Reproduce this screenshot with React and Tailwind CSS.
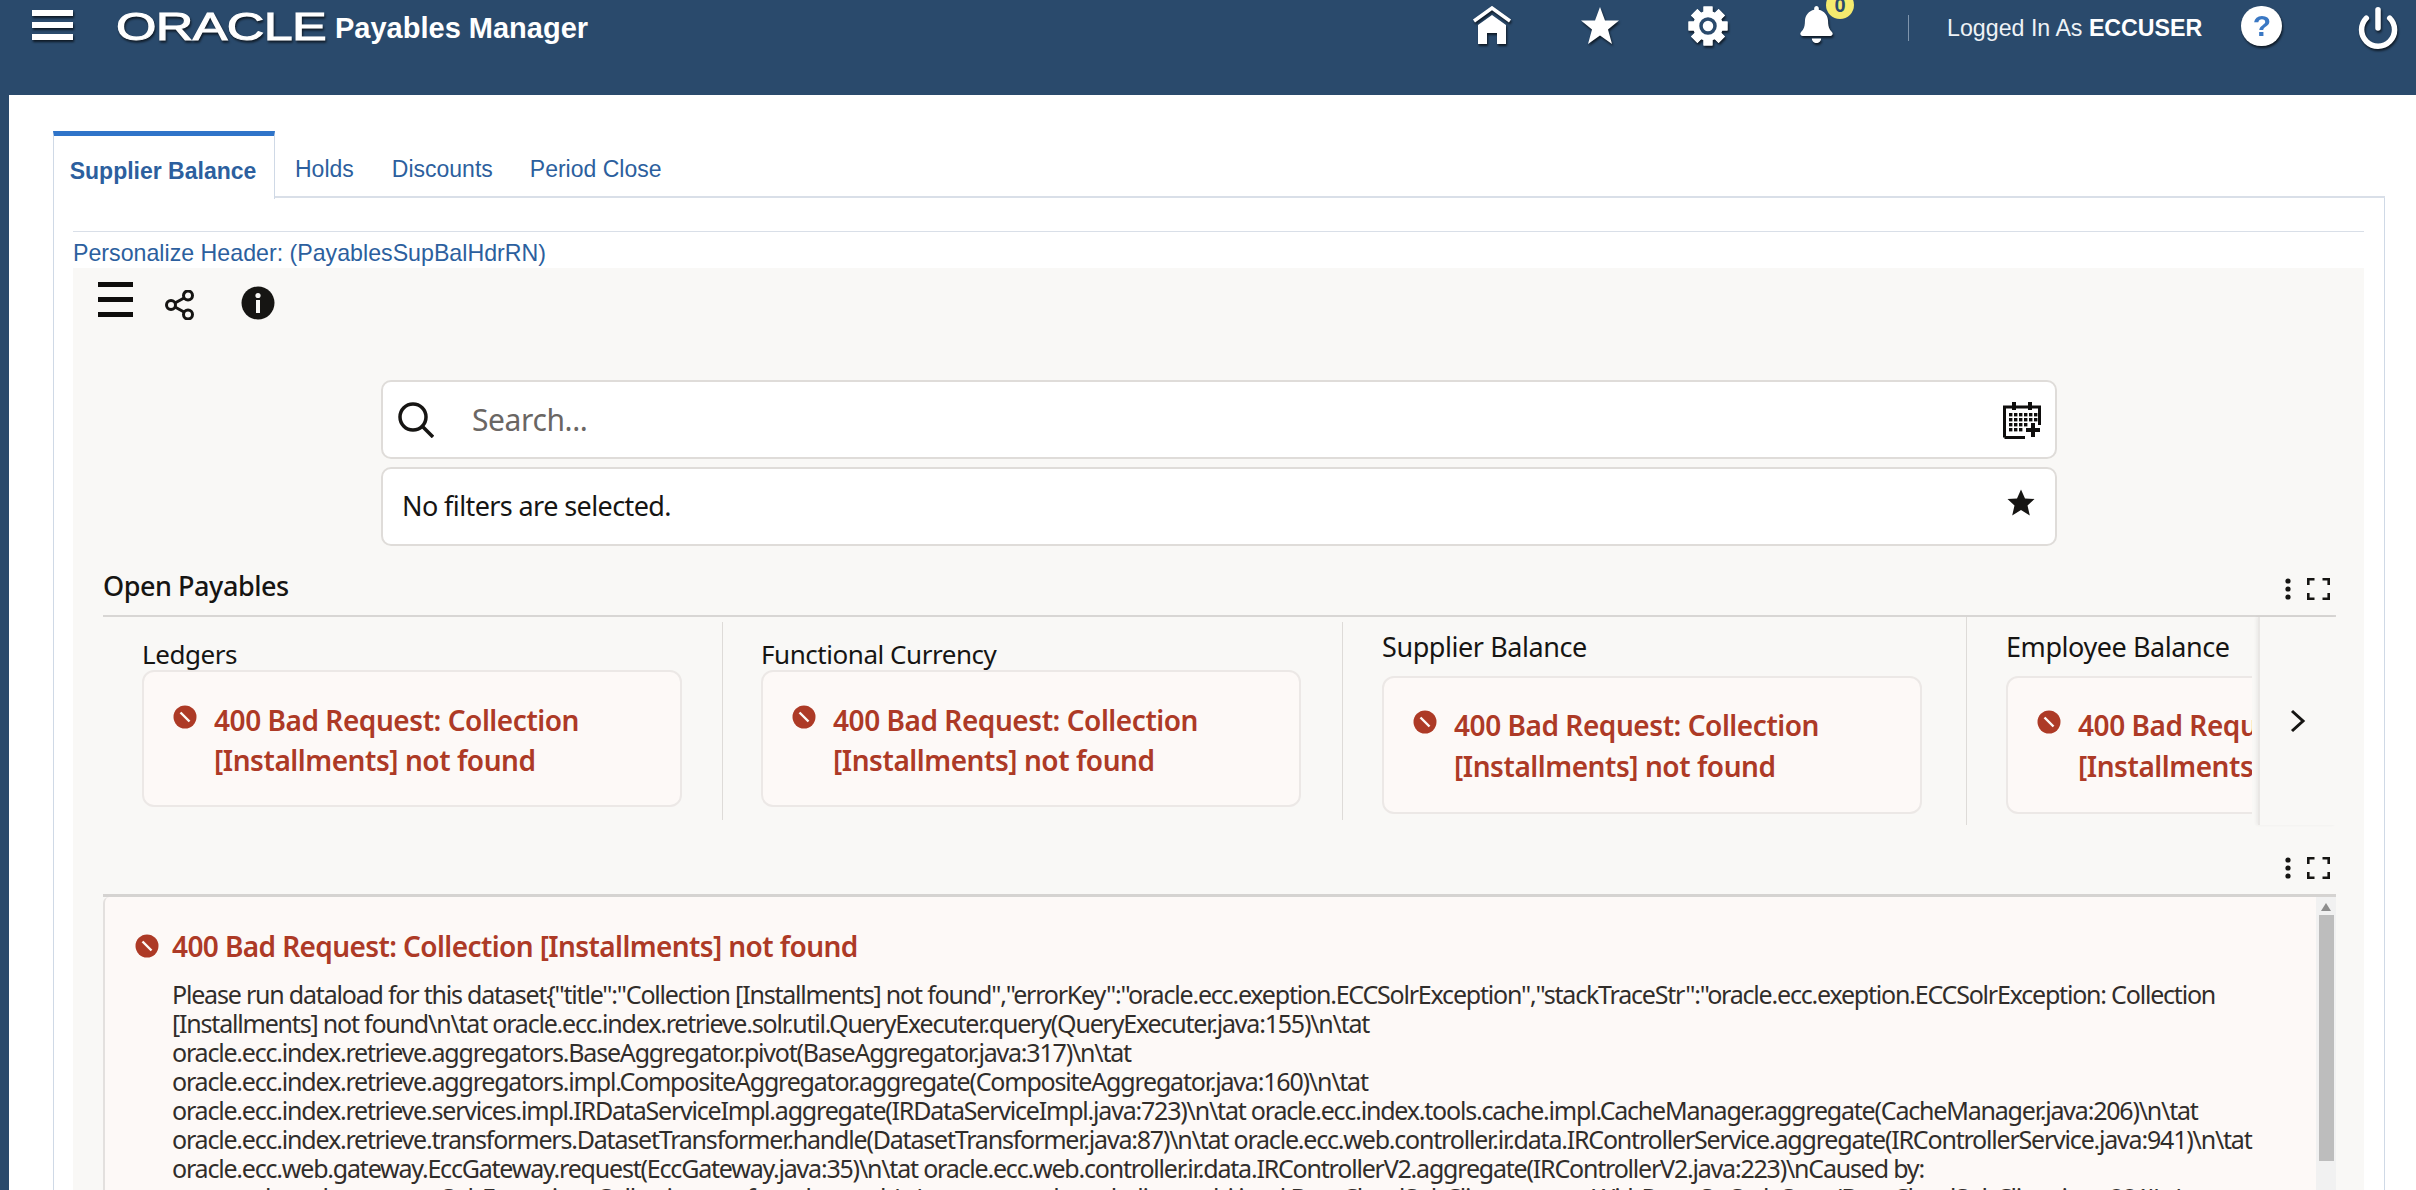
import React from "react";
import { FaBell } from "react-icons/fa";
import { Power } from "lucide-react";

const shadow = "drop-shadow-[1px_2px_1px_rgba(0,0,0,0.65)]";

function Burger() {
  return (
    <div className={`mt-[4px] flex h-[30px] w-[41px] flex-col justify-between ${shadow}`}>
      <div className="h-[6px] bg-white" />
      <div className="h-[6px] bg-white" />
      <div className="h-[6px] bg-white" />
    </div>
  );
}

function Home() {
  return (
    <svg width="40" height="39" viewBox="0 0 40 39" className={shadow}>
      <polyline points="2,15 20,2 38,15" fill="none" stroke="#fff" strokeWidth="3.5" />
      <path d="M6 19 L20 9 L34 19 V38 H25 V27 H15 V38 H6 Z" fill="#fff" />
    </svg>
  );
}

function HeadStar() {
  return (
    <svg width="40" height="39" viewBox="0 0 40 39" className={shadow}>
      <polygon points="20,1 25,14.5 39,14.5 28,23.5 32,38 20,29.5 8,38 12,23.5 1,14.5 15,14.5" fill="#fff" />
    </svg>
  );
}

function Gear() {
  const angles = [0, 45, 90, 135, 180, 225, 270, 315];
  return (
    <svg width="40" height="40" viewBox="0 0 40 40" className={shadow}>
      {angles.map((a) => (
        <rect key={a} x="15.5" y="0.5" width="9" height="39" fill="#fff" transform={`rotate(${a} 20 20)`} />
      ))}
      <circle cx="20" cy="20" r="15" fill="#fff" />
      <circle cx="20" cy="20" r="7" fill="#fff" stroke="#2a4a6c" strokeWidth="3.5" />
    </svg>
  );
}

function Dots({ className = "" }) {
  return (
    <div className={`flex items-center gap-[16px] ${className}`}>
      <svg width="6" height="22" viewBox="0 0 6 22">
        <circle cx="3" cy="3" r="2.6" fill="#161513" />
        <circle cx="3" cy="11" r="2.6" fill="#161513" />
        <circle cx="3" cy="19" r="2.6" fill="#161513" />
      </svg>
      <svg width="23" height="22" viewBox="0 0 23 22" fill="none" stroke="#161513" strokeWidth="2.6">
        <path d="M1.3 7V1.3H7.5M15.5 1.3H21.7V7M21.7 15V20.7H15.5M7.5 20.7H1.3V15" />
      </svg>
    </div>
  );
}

function ErrIcon({ className = "" }) {
  return (
    <svg width="24" height="24" viewBox="0 0 24 24" className={`shrink-0 ${className}`}>
      <circle cx="12" cy="12" r="11.5" fill="#ad3a26" />
      <line x1="7.5" y1="7.5" x2="16.5" y2="16.5" stroke="#fdf9f7" strokeWidth="2.4" />
    </svg>
  );
}

function Widget({ title, narrow, pad, clip }) {
  return (
    <div className={`h-full ${pad} ${clip ? "overflow-hidden" : ""}`}>
      <div className={`flex flex-col ${narrow ? "pt-[12px]" : "pt-[21px]"}`}>
        <div
          className={`text-[#161513] ${
            narrow
              ? "h-[47px] text-[27px] leading-[36px] tracking-[-0.43px]"
              : "h-[32px] text-[26px] leading-[32px] tracking-[-0.45px]"
          }`}
        >
          {title}
        </div>
        <div
          className={`flex w-[540px] shrink-0 gap-[17px] rounded-[12px] border-2 border-[#ece8e6] bg-[#fdf9f7] pl-[29px] ${
            narrow ? "h-[138px] pt-[27px]" : "h-[137px] pt-[28px]"
          }`}
        >
          <ErrIcon className="mt-[5px]" />
          <div
            className={`w-[420px] text-[28px] font-semibold tracking-[-0.45px] text-[#ad3a26] ${
              narrow ? "leading-[41px]" : "leading-[40px]"
            }`}
          >
            400 Bad Request: Collection [Installments] not found
          </div>
        </div>
      </div>
    </div>
  );
}

const lines = [
  'Please run dataload for this dataset{"title":"Collection [Installments] not found","errorKey":"oracle.ecc.exeption.ECCSolrException","stackTraceStr":"oracle.ecc.exeption.ECCSolrException: Collection',
  "[Installments] not found\\n\\tat oracle.ecc.index.retrieve.solr.util.QueryExecuter.query(QueryExecuter.java:155)\\n\\tat",
  "oracle.ecc.index.retrieve.aggregators.BaseAggregator.pivot(BaseAggregator.java:317)\\n\\tat",
  "oracle.ecc.index.retrieve.aggregators.impl.CompositeAggregator.aggregate(CompositeAggregator.java:160)\\n\\tat",
  "oracle.ecc.index.retrieve.services.impl.IRDataServiceImpl.aggregate(IRDataServiceImpl.java:723)\\n\\tat oracle.ecc.index.tools.cache.impl.CacheManager.aggregate(CacheManager.java:206)\\n\\tat",
  "oracle.ecc.index.retrieve.transformers.DatasetTransformer.handle(DatasetTransformer.java:87)\\n\\tat oracle.ecc.web.controller.ir.data.IRControllerService.aggregate(IRControllerService.java:941)\\n\\tat",
  "oracle.ecc.web.gateway.EccGateway.request(EccGateway.java:35)\\n\\tat oracle.ecc.web.controller.ir.data.IRControllerV2.aggregate(IRControllerV2.java:223)\\nCaused by:",
  "org.apache.solr.common.SolrException: Collection not found: actuals\\n\\tat org.apache.solr.client.solrj.impl.BaseCloudSolrClient.requestWithRetryOnStaleState(BaseCloudSolrClient.java:881)\\n\\tat",
];

export default function App() {
  return (
    <div className="h-[1190px] w-[2416px] overflow-hidden bg-[#2a4a6c] font-['Liberation_Sans',Arial,sans-serif]">
      {/* header */}
      <header className="flex h-[95px] items-start pl-[32px] pt-[6px] text-white">
        <Burger />
        <div className={`ml-[43px] mt-[4px] h-[34px] w-[209px] ${shadow}`}>
          <span className="block origin-left scale-x-[1.37] text-[38px] font-normal leading-[34px] tracking-[-0.5px] [-webkit-text-stroke:1px_white]">
            ORACLE
          </span>
        </div>
        <div className="ml-[10px] mt-[4px] text-[29px] font-bold leading-[36px]">Payables Manager</div>
        <div className="ml-[884px]"><Home /></div>
        <div className="ml-[68px]"><HeadStar /></div>
        <div className="ml-[68px]"><Gear /></div>
        <div className="relative ml-[71px] w-[34px]">
          <FaBell size={37} className={`-ml-[1px] ${shadow}`} />
          <div className="absolute -top-[15px] left-[27px] flex h-[28px] w-[28px] items-center justify-center rounded-full bg-[#f4ea6e] text-[20px] font-bold leading-none text-[#2a4a6c]">
            0
          </div>
        </div>
        <div className="ml-[75px] mt-[9px] h-[26px] w-px bg-[#7f95ad]" />
        <div className="ml-[38px] mt-[4px] whitespace-nowrap text-[23.2px] leading-[36px] text-[#eef2f6]">
          Logged In As <span className="font-bold text-white">ECCUSER</span>
        </div>
        <div className={`ml-[39px] flex h-[40px] w-[41px] items-center justify-center rounded-full bg-white text-[30px] font-bold leading-none text-[#3a78c4] ${shadow}`}>
          ?
        </div>
        <Power size={44} strokeWidth={3} className={`ml-[74px] ${shadow}`} />
      </header>

      {/* page */}
      <main className="ml-[9px] h-[1095px] bg-white pl-[44px] pr-[31px] pt-[36px]">
        {/* tabs */}
        <div className="flex h-[67px] text-[23px] text-[#2c5f9e]">
          <div className="flex h-[68px] w-[222px] items-center justify-center border-x border-t-[5px] border-x-[#cfd9e6] border-t-[#2f74c9] bg-white pr-[2px] pt-[8px] font-bold">
            Supplier Balance
          </div>
          <div className="flex flex-1 items-center border-b-2 border-[#d9dfe8] pt-[12px]">
            <span className="ml-[20px]">Holds</span>
            <span className="ml-[38px]">Discounts</span>
            <span className="ml-[37px]">Period Close</span>
          </div>
        </div>

        {/* tab body */}
        <div className="h-[1000px] border-x border-[#cfd9e6] pl-[19px] pr-[20px] pt-[33px]">
          <div className="h-px bg-[#d9dfe8]" />
          <div className="h-[36px] whitespace-nowrap pt-[3px] text-[23.2px] leading-[36px] text-[#2c5f9e]">
            Personalize Header: (PayablesSupBalHdrRN)
          </div>

          <section className="h-[930px] bg-[#f9f8f6] font-['Noto_Sans',sans-serif]">
            {/* toolbar */}
            <div className="flex items-start pl-[25px] pt-[14px]">
              <div className="flex h-[35px] w-[35px] flex-col justify-between">
                <div className="h-[5px] bg-[#0e0d0c]" />
                <div className="h-[5px] bg-[#0e0d0c]" />
                <div className="h-[5px] bg-[#0e0d0c]" />
              </div>
              <svg width="30" height="30" viewBox="0 0 30 30" fill="none" stroke="#161513" strokeWidth="3" className="ml-[32px] mt-[8px]">
                <circle cx="6" cy="15" r="4.5" />
                <circle cx="23" cy="5.5" r="4.5" />
                <circle cx="23" cy="24.5" r="4.5" />
                <path d="M10 13 L19 8 M10 17 L19 22" />
              </svg>
              <svg width="34" height="34" viewBox="0 0 34 34" className="ml-[46px] mt-[4px]">
                <circle cx="17" cy="17" r="16.5" fill="#161513" />
                <rect x="15" y="14" width="4" height="13" fill="#f9f8f6" />
                <circle cx="17" cy="9.5" r="2.6" fill="#f9f8f6" />
              </svg>
            </div>

            {/* search */}
            <div className="ml-[308px] mt-[60px] flex w-[1676px] flex-col gap-[8px]">
              <div className="flex h-[79px] items-center rounded-[10px] border-2 border-[#dfdcd9] bg-white pl-[15px] pr-[14px]">
                <svg width="36" height="36" viewBox="0 0 36 36" fill="none" stroke="#161513" strokeWidth="3.5">
                  <circle cx="15" cy="15" r="13" />
                  <line x1="24" y1="24" x2="35" y2="35" />
                </svg>
                <span className="ml-[38px] flex-1 text-[30px] tracking-[-0.4px] text-[#6a6663]">Search...</span>
                <svg width="38" height="38" viewBox="0 0 38 38">
                  <path d="M1.5 30V6H36.5V24M1.5 36.5H22" fill="none" stroke="#0e0d0c" strokeWidth="3" />
                  <path d="M1.5 30V36.5" stroke="#0e0d0c" strokeWidth="3" />
                  <rect x="9" y="1" width="4" height="8" fill="#0e0d0c" />
                  <rect x="25" y="1" width="4" height="8" fill="#0e0d0c" />
                  {[12, 17, 22, 27].map((y) =>
                    [6, 11, 16, 21, 26, 31].slice(0, y > 22 ? 3 : y > 17 ? 4 : 6).map((x) => (
                      <rect key={`${x}-${y}`} x={x} y={y} width="3.4" height="3.4" fill="#0e0d0c" />
                    ))
                  )}
                  <path d="M30 22V36M23 29H37" stroke="#0e0d0c" strokeWidth="4" />
                </svg>
              </div>
              <div className="flex h-[79px] items-center justify-between rounded-[10px] border-2 border-[#dfdcd9] bg-white pl-[19px] pr-[20px]">
                <span className="text-[27px] tracking-[-0.6px] text-[#161513]">No filters are selected.</span>
                <svg width="28" height="27" viewBox="0 0 28 27" className="-mt-[9px]">
                  <polygon points="14,0.5 18,9.5 27.5,10 20.5,16.5 22.8,26.5 14,21 5.2,26.5 7.5,16.5 0.5,10 10,9.5" fill="#161513" />
                </svg>
              </div>
            </div>

            {/* open payables */}
            <div className="ml-[30px] mr-[28px]">
              <div className="flex h-[71px] items-start justify-between border-b-2 border-[#d8d6d4] pt-[22px]">
                <span className="text-[27px] font-medium leading-[36px] tracking-[-0.45px] text-[#161513]">Open Payables</span>
                <Dots className="mr-[6px] mt-[10px]" />
              </div>
              <div className="relative grid h-[208px] grid-cols-[620px_620px_624px_291px_78px]">
                <div className="my-[5px] border-r border-[#dedbd8]">
                  <Widget title="Ledgers" pad="-mt-[5px] pl-[39px]" />
                </div>
                <div className="my-[5px] border-r border-[#dedbd8]">
                  <Widget title="Functional Currency" pad="-mt-[5px] pl-[38px]" />
                </div>
                <div className="border-r border-[#dedbd8]">
                  <Widget title="Supplier Balance" narrow pad="pl-[39px]" />
                </div>
                <div className="mr-[6px]">
                  <Widget title="Employee Balance" narrow pad="pl-[39px]" clip />
                </div>
                <div className="flex items-center justify-center border-l-2 border-[#e9e7e5] shadow-[-2px_0_3px_rgba(0,0,0,0.05)]">
                  <svg width="16" height="24" viewBox="0 0 16 24" fill="none" stroke="#161513" strokeWidth="3">
                    <polyline points="2,2 13,12 2,22" />
                  </svg>
                </div>
              </div>

              {/* error panel */}
              <div className="flex h-[34px] items-start justify-end pt-[32px]">
                <Dots className="mr-[6px]" />
              </div>
              <div className="mt-[35px] flex h-[300px] border-t-[3px] border-[#d5d3d1]">
                <div className="flex-1 rounded-tl-[6px] border-l-2 border-[#e3e0de] bg-[#fdf9f7] pl-[30px] pt-[31px]">
                  <div className="flex items-center gap-[13px]">
                    <ErrIcon />
                    <span className="text-[28px] font-semibold leading-[36px] tracking-[-0.6px] text-[#ad3a26]">
                      400 Bad Request: Collection [Installments] not found
                    </span>
                  </div>
                  <div className="ml-[37px] mt-[16px] whitespace-nowrap text-[25px] leading-[29px] tracking-[-1.2px] text-[#312d2a]">
                    {lines.map((l) => (
                      <div key={l}>{l}</div>
                    ))}
                  </div>
                </div>
                <div className="flex w-[20px] flex-col items-center bg-[#f1f1f1] pt-[4px]">
                  <svg width="10" height="8" viewBox="0 0 10 8" className="mt-[2px]">
                    <polygon points="5,0 10,8 0,8" fill="#8d8d8d" />
                  </svg>
                  <div className="mt-[4px] h-[246px] w-[15px] bg-[#bdbdbd]" />
                </div>
              </div>
            </div>
          </section>
        </div>
      </main>
    </div>
  );
}
